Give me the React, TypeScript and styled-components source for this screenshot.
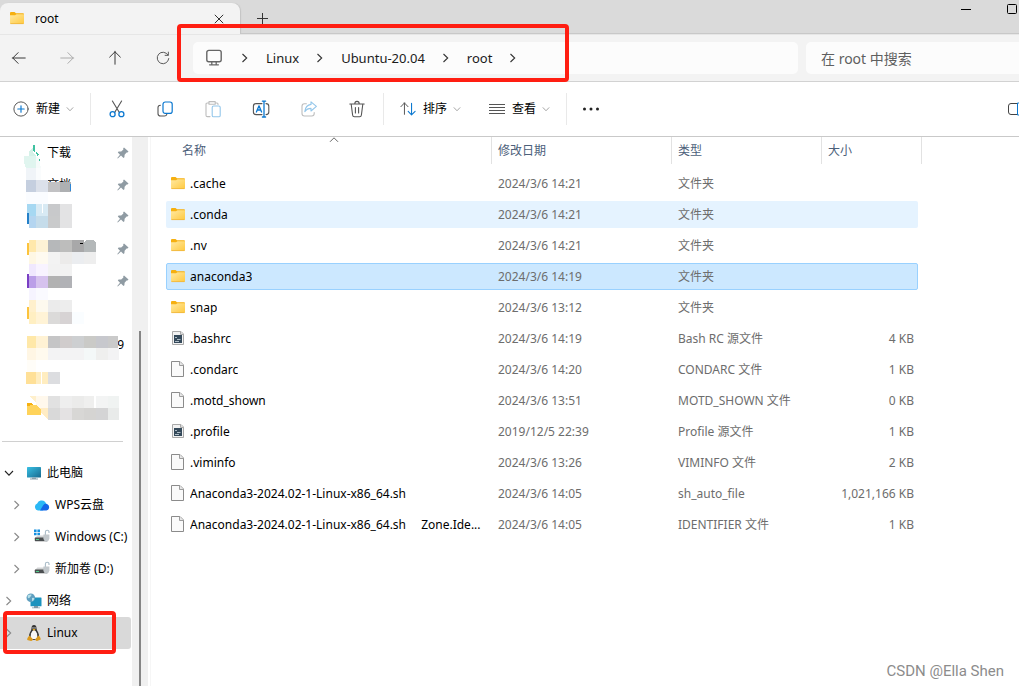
import React from 'react';
import styled, { createGlobalStyle } from 'styled-components';

const GlobalStyle = createGlobalStyle`
  * { box-sizing: border-box; }
  body {
    margin: 0;
    background: #fff;
    color: #000;
    font: 12px/16px "Noto Sans", "Noto Sans CJK SC", sans-serif;
    overflow-x: hidden;
  }
  button, input { font: inherit; color: inherit; }
  button { padding: 0; border: 0; background: none; }
  svg { display: block; flex: none; }
`;

const Window = styled.div`
  position: relative;
  display: flex;
  flex-direction: column;
  min-height: 100vh;
  overflow: hidden;
`;

/* ---------- title bar ---------- */

const TitleBar = styled.header`
  display: flex;
  align-items: flex-end;
  height: 34px;
  background: #dadada;
  box-shadow: inset 0 -1px #c8c8c8;
`;

const Tab = styled.div`
  display: flex;
  align-items: center;
  width: 240px;
  height: 31px;
  padding: 0 16px 0 9px;
  border-radius: 8px 8px 0 0;
  background: #f3f3f3;
  box-shadow: 1px 0 1px #c4c4c4;
`;

const TabTitle = styled.span`
  flex: 1;
  padding-left: 10px;
`;

const IconButton = styled.button<{ $w?: number; $h?: number }>`
  display: flex;
  align-items: center;
  justify-content: center;
  flex: none;
  width: ${(p) => p.$w ?? 48}px;
  height: ${(p) => p.$h ?? 32}px;
`;

const WindowControls = styled.div`
  display: flex;
  align-self: flex-start;
  margin-left: auto;
`;

const MaximizeButton = styled(IconButton)`
  justify-content: flex-end;
  padding-right: 2px;
`;

/* ---------- navigation ---------- */

const NavBar = styled.nav`
  position: relative;
  display: flex;
  align-items: center;
  height: 48px;
  border-top: 1px solid #e6e6e6;
  border-bottom: 1px solid #d2d2d2;
  background: #f3f3f3;
`;

const NavButtons = styled.div`
  display: flex;
  width: 193px;
  flex: none;

  button:first-child {
    width: 43px;
    padding-right: 5px;
  }
`;

const Address = styled.div`
  display: flex;
  align-items: center;
  gap: 12px;
  flex: 1;
  height: 32px;
  padding-left: 11px;
  border-radius: 5px;
  background: #fcfcfc;
  color: #1b1b1b;
`;

const Crumb = styled.a`
  color: inherit;
  font-size: 13px;
  line-height: 20px;
  text-decoration: none;
`;

const Search = styled.input`
  width: 213px;
  height: 32px;
  margin-left: 8px;
  padding: 0 15px;
  border: 0;
  border-radius: 5px 0 0 5px;
  background: #fcfcfc;
  font-size: 14px;

  &::placeholder { color: #5f5f5f; opacity: 1; }
`;

const Frame = styled.div`
  position: absolute;
  z-index: 2;
  border: 4px solid #ff1e12;
  border-radius: 4px;
  pointer-events: none;
`;

const AddressFrame = styled(Frame)`
  top: -11px;
  left: 177px;
  width: 392px;
  height: 58px;
`;

const ItemFrame = styled(Frame)`
  top: -6px;
  left: 3px;
  width: 113px;
  height: 43px;
`;

/* ---------- command bar ---------- */

const CommandBar = styled.div`
  display: flex;
  align-items: center;
  height: 55px;
  padding-left: 13px;
  border-bottom: 1px solid #c9c9c9;
  background: #fff;
  overflow: hidden;
`;

const Command = styled.button<{ $w: number }>`
  display: flex;
  align-items: center;
  gap: 7px;
  flex: none;
  width: ${(p) => p.$w}px;
  height: 32px;

  svg:last-child { margin-left: -1px; }
`;

const Divider = styled.span<{ $left?: number; $right?: number }>`
  width: 1px;
  height: 32px;
  margin: 0 ${(p) => p.$right ?? 0}px 0 ${(p) => p.$left ?? 0}px;
  background: #e9e9e9;
`;

const PaneToggle = styled(IconButton)`
  justify-content: flex-start;
  margin-left: auto;
`;

/* ---------- body ---------- */

const Body = styled.div`
  display: flex;
  flex: 1;
`;

const Sidebar = styled.aside`
  position: relative;
  width: 132px;
  flex: none;
`;

const List = styled.ul`
  position: relative;
  margin: 0;
  padding: 0;
  list-style: none;
`;

const TreeItem = styled.li<{ $level?: number; $selected?: boolean }>`
  position: relative;
  display: flex;
  align-items: center;
  height: 32px;
  margin-right: 1px;
  padding-left: ${(p) => (p.$level ?? 0) * 8}px;
  border-radius: 0 3px 3px 0;
  background: ${(p) => (p.$selected ? '#d9d9d9' : 'transparent')};
`;

const TreeLink = styled.a`
  display: flex;
  align-items: center;
  gap: 5px;
  margin-left: 9px;
  color: inherit;
  text-decoration: none;
  white-space: nowrap;
`;

const QuickItem = styled.li`
  display: flex;
  align-items: center;
  justify-content: space-between;
  height: 32px;
  padding: 0 3px 0 47px;
`;

const QuickLink = styled.a`
  color: inherit;
  text-decoration: none;
`;

const LongName = styled(QuickLink)`
  flex: 1;
  padding-right: 5px;
  text-align: right;
`;

const Mosaic = styled.svg`
  position: absolute;
  top: 0;
  left: 0;
`;

const Rule = styled.hr`
  width: 121px;
  height: 1px;
  margin: 16px 0 15px 2px;
  border: 0;
  background: #d0d0d0;
`;

const ScrollTrack = styled.div`
  display: flex;
  flex: none;
  width: 16px;
  padding: 194px 7px 0 7px;
  background: #f0f0f0;
`;

const ScrollThumb = styled.div`
  flex: 1;
  background: #858585;
`;

const Main = styled.main`
  flex: 1;
  min-width: 0;
  margin-left: 2px;
  padding-left: 15px;
  border-left: 1px solid #f6f6f6;
`;

const Files = styled.table`
  display: block;
`;

const Head = styled.thead`
  display: block;
  padding-left: 10px;
`;

const HeadRow = styled.tr`
  display: grid;
  grid-template-columns: 316px 180px 150px 100px;
  height: 27px;
`;

const HeadCell = styled.th`
  position: relative;
  display: flex;
  align-items: center;
  padding: 0 6px;
  border-right: 1px solid #e2e2e2;
  color: #4c607a;
  font-weight: 400;
`;

const SortMark = styled.svg`
  position: absolute;
  top: 0;
  left: 50%;
  margin-left: -5px;
`;

const FileRows = styled.tbody`
  display: grid;
  gap: 4px;
  padding-top: 6px;
`;

const FileRow = styled.tr<{ $state?: 'hover' | 'selected' }>`
  display: grid;
  grid-template-columns: 325px 180px 150px 95px;
  align-items: center;
  width: 752px;
  height: 27px;
  border: 1px solid ${(p) => (p.$state === 'selected' ? '#99d1ff' : 'transparent')};
  border-radius: 2px;
  background: ${(p) => (p.$state === 'selected' ? '#cce8ff' : p.$state === 'hover' ? '#e5f3ff' : 'transparent')};
`;

const NameCell = styled.td`
  display: flex;
  align-items: center;
  gap: 4px;
  padding: 0 8px 0 3px;
`;

const FileName = styled.span`
  overflow: hidden;
  text-overflow: ellipsis;
  white-space: pre;
`;

const Cell = styled.td<{ $end?: boolean }>`
  padding: 0 ${(p) => (p.$end ? 3 : 6)}px 0 6px;
  color: #6d6d6d;
  text-align: ${(p) => (p.$end ? 'right' : 'left')};
  white-space: nowrap;
`;

const Watermark = styled.div`
  position: absolute;
  right: 15px;
  bottom: 5px;
  color: #8c8c8c;
  font: 15px/20px Roboto, "Liberation Sans", sans-serif;
`;

/* ---------- drawings ---------- */

const FolderIcon = () => (
  <svg width="16" height="15" viewBox="0 1 16 15">
    <defs>
      <linearGradient id="folder" x1="0" y1="0" x2="1" y2="1">
        <stop offset="0" stopColor="#ffe9a2" />
        <stop offset="1" stopColor="#ffc93f" />
      </linearGradient>
    </defs>
    <path d="M1 3Q1 2 2 2H5.5L7 3.2H14Q15 3.2 15 4.2V8H1Z" fill="#f6b010" />
    <path d="M1 5.2H6L7.5 4.2H15V13Q15 14 14 14H2Q1 14 1 13Z" fill="url(#folder)" />
    <path d="M1.4 13.6H14.6" stroke="#eeb43a" strokeWidth="0.8" />
  </svg>
);

const FileIcon = () => (
  <svg width="16" height="17" viewBox="0 1 16 17">
    <path d="M1.5 1.5H10L13.5 5V16.5H1.5Z" fill="#fafafa" stroke="#8b8b8b" />
    <path d="M9.5 1.5V5.5H13.5" fill="#e6e6e6" stroke="#9c9c9c" />
  </svg>
);

const ScriptIcon = () => (
  <svg width="16" height="17" viewBox="0 1 16 17">
    <path d="M2.5 2.5H11L13.5 5V15.5H2.5Z" fill="#f2f2f2" stroke="#a9a9a9" />
    <path d="M10.5 2.5V5.5H13.5" fill="#ddd" stroke="#a9a9a9" />
    <rect x="4" y="6" width="8" height="8" fill="#34495a" />
    <path d="M5 8.5H7M7 10.5H10.5M5 12.5H9" stroke="#aebcc6" />
  </svg>
);

const Chevron = ({ dir, color = '#333', size = 10 }: { dir: 'right' | 'down'; color?: string; size?: number }) => (
  <svg width={size} height={size} viewBox="0 0 10 10" fill="none" stroke={color} strokeWidth="1.1">
    <path d={dir === 'right' ? 'M2.5 1L6.7 5L2.5 9' : 'M1 3L5 7.2L9 3'} />
  </svg>
);

const Line = ({ children, size = 18, color = '#555' }: { children: React.ReactNode; size?: number; color?: string }) => (
  <svg width={size} height={size} viewBox="0 0 18 18" fill="none" stroke={color} strokeWidth="1.1" strokeLinecap="round" strokeLinejoin="round">
    {children}
  </svg>
);

const BLUE = '#0b78d0';

const Pin = () => (
  <svg width="12" height="12" viewBox="0 0 12 12">
    <path d="M7 0.5L11.5 4.5L10.5 5.5L9.6 5.4L7.6 7.8L7.4 10.3L6.5 11L4 8.6L0.8 11.6L0.3 11.1L3 7.7L0.8 5.4L1.6 4.5L4.2 4.4L6.4 2.4L6.2 1.3Z" fill="#8f9ba3" />
  </svg>
);

const PcIcon = () => (
  <svg width="16" height="16" viewBox="0 0 16 16">
    <defs>
      <linearGradient id="pc" x1="0" y1="0" x2="1" y2="1">
        <stop offset="0" stopColor="#39c0e4" />
        <stop offset="1" stopColor="#17698f" />
      </linearGradient>
    </defs>
    <rect x="1" y="2" width="14" height="10.6" rx="0.6" fill="url(#pc)" />
    <path d="M6 12.6H10V13.6H12V14.6H4V13.6H6Z" fill="#8aa0ac" />
  </svg>
);

const CloudIcon = () => (
  <svg width="16" height="16" viewBox="0 0 16 16">
    <path d="M4 13.5A3.6 3.6 0 0 1 3.2 6.6A4.8 4.8 0 0 1 11 4.8L13 8L9 13.5Z" fill="#2bb8f5" />
    <path d="M6 13.5L9.2 8.2A3.6 3.6 0 0 1 13 7A3.4 3.4 0 0 1 12.4 13.5Z" fill="#1467e8" />
  </svg>
);

const DriveIcon = ({ system }: { system?: boolean }) => (
  <svg width="16" height="16" viewBox="0 0 16 16">
    {system && <path d="M0 0.6H2.6V3H0ZM3.4 0.6H6V3H3.4ZM0 3.8H2.6V6.2H0ZM3.4 3.8H6V6.2H3.4Z" fill="#1490e0" />}
    <path d="M3.4 6.6H13L14.5 9H1Z" fill="#d2d4d5" />
    <rect x="0.8" y="8.6" width="13" height="3.6" rx="0.6" fill="#4b4f51" />
    <rect x="2" y="10" width="3" height="1" fill="#4fcf8a" />
    <path d="M11.4 6V3A1.8 1.8 0 0 1 15 3V4" fill="none" stroke="#a9bcc8" strokeWidth="1.1" />
    <path d="M9.4 5.6H15.4V9.6Q15.4 11.8 12.4 13Q9.4 11.8 9.4 9.6Z" fill="#c2c8cc" />
  </svg>
);

const NetworkIcon = () => (
  <svg width="16" height="16" viewBox="0 0 16 16">
    <rect x="4.5" y="4.6" width="11" height="8.6" rx="0.5" fill="#1c93be" />
    <path d="M8 13H12V14.4H14V15.2H6V14.4H8Z" fill="#7f98a6" />
    <circle cx="4.8" cy="4.8" r="4.3" fill="#5f9fbf" />
    <path d="M2 2.2Q4 1 5.5 1.6Q5.6 3.4 4 4Q3.8 5.6 2 5Q1.2 3.6 2 2.2ZM6 5Q8 4.4 8.4 5.8Q7.6 8 6 8.2Z" fill="#b5dfe9" />
  </svg>
);

const TuxIcon = () => (
  <svg width="16" height="18" viewBox="0 0 16 18">
    <path d="M8 1Q10.4 1 10.5 4.2Q10.6 6.2 12.2 8.6Q13.8 11.2 12.6 14.6L8 16L3.4 14.6Q2.2 11.2 3.9 8.4Q5.5 6 5.5 4.2Q5.6 1 8 1Z" fill="#333" />
    <path d="M8 6Q9.8 6.2 11 9.4Q12 12.6 10.6 15H5.4Q4 12.6 5 9.4Q6.2 6.2 8 6Z" fill="#f7f7f7" />
    <circle cx="7" cy="3.9" r="0.7" fill="#fff" />
    <circle cx="9" cy="3.9" r="0.7" fill="#fff" />
    <path d="M6.4 5.4L8 4.7L9.6 5.4L8 6.8Z" fill="#e8a81c" />
    <path d="M3.4 11.6L6.8 15Q6.8 17.2 5 17L1.2 16Q1.2 14 2 13.2ZM12.6 11.6L9.4 15Q9.4 17.2 11 17L14.8 15.6Q14.6 14 14 13Z" fill="#dc9a1d" />
  </svg>
);

/* Pixelated cover over the private names: [x, y, width, colour], 12px high */
const tiles: [number, number, number, string][] = [
  [26, 168, 10, '#f0f4f8'], [36, 168, 5, '#fafcfd'],
  [26, 180, 10, '#c5cfdf'], [36, 180, 12, '#dce1ea'], [48, 182, 12, '#c2c2c4'], [60, 182, 11, '#aeb0b2'],
  [26, 192, 22, '#fafcff'],
  [27, 204, 9, '#a6d8f2'], [36, 204, 12, '#d8eaf4'], [48, 204, 12, '#c8c9cb'], [60, 204, 12, '#e3e3e4'],
  [29, 216, 7, '#b4d5f0'], [36, 216, 12, '#c5dcea'], [48, 216, 12, '#c9cacb'], [60, 216, 12, '#e3e3e4'],
  [29, 240, 7, '#ffe8ab'], [36, 240, 12, '#fdf2d5'], [48, 240, 12, '#b6b8ba'], [60, 240, 12, '#bdbdbc'], [72, 240, 12, '#a8a8a9'],
  [29, 252, 7, '#fef7e4'], [36, 252, 12, '#fefaf0'], [48, 252, 12, '#f3f3f3'], [60, 252, 12, '#ecebea'], [72, 252, 12, '#ebedf0'], [84, 252, 12, '#eeeeee'],
  [29, 264, 7, '#f0e8fe'], [36, 264, 12, '#f8f3ff'], [48, 264, 24, '#f2f2f2'],
  [29, 276, 7, '#bb9fe8'], [36, 276, 12, '#d6c2ee'], [48, 276, 12, '#b2b2b2'], [60, 276, 12, '#b1b2b6'],
  [29, 288, 7, '#f6f4ff'], [36, 288, 12, '#fafaff'],
  [29, 300, 7, '#fff0cc'], [36, 300, 12, '#fdf9ee'], [48, 300, 12, '#ebebeb'], [60, 300, 12, '#ededed'],
  [29, 312, 7, '#ffefc2'], [36, 312, 12, '#fff3d6'], [48, 312, 12, '#dbdad9'], [60, 312, 12, '#d7d3d4'], [72, 312, 12, '#fafdff'],
  [27, 336, 9, '#ffe8a8'], [36, 336, 12, '#fff2d4'], [48, 336, 12, '#c5c5c6'], [60, 336, 12, '#d0cccc'], [72, 336, 12, '#cdcfd1'], [84, 336, 12, '#cacac7'], [96, 336, 12, '#c7c8cd'], [108, 336, 10, '#cacaca'],
  [27, 348, 9, '#fff6e4'], [36, 348, 12, '#fffaee'], [48, 348, 36, '#f3f3f4'], [84, 348, 12, '#f4f8f8'], [96, 348, 12, '#efefee'], [108, 348, 11, '#f3f3f4'],
  [27, 360, 9, '#fffdf8'],
  [26, 372, 10, '#ffe097'], [36, 372, 5, '#ffedc0'], [42, 372, 6, '#ffedc0'], [48, 372, 12, '#dcdde0'],
  [36, 396, 12, '#fff8ec'], [48, 396, 12, '#e1e1e1'], [60, 396, 12, '#eeeeee'], [72, 396, 12, '#ebebea'], [84, 396, 10, '#efefee'], [96, 396, 12, '#f3f4f4'], [108, 396, 11, '#f0f3f2'],
  [48, 408, 12, '#d9d9d9'], [60, 408, 12, '#e4e2e3'], [72, 408, 12, '#d8d7d5'], [84, 408, 12, '#d5d4d2'], [96, 408, 12, '#d4d4d5'], [108, 408, 11, '#e9ebea'],
];

const NameCover = () => (
  <Mosaic width="132" height="288" viewBox="0 137 132 288" shapeRendering="crispEdges" aria-hidden="true">
    <path d="M33 145H35V153L33 151ZM36 152L39 154L37 156ZM39 159H40V162H39Z" fill="#3fc1a0" />
    <path d="M29 151L33 148V152L36 156V157H29Z" fill="#d5f1e8" />
    <path d="M24 156H36V168H26L24 162Z" fill="#e0f5ef" />
    <path d="M36 157L39 158L41 168H36Z" fill="#f6fbfa" />
    {tiles.map(([x, y, w, fill]) => (
      <rect key={`${x}-${y}`} x={x} y={y} width={w} height={y === 182 ? 10 : 12} fill={fill} />
    ))}
    <path d="M84 242L87 240H93L96 242V252H84Z" fill="#b4b8b9" />
    <path d="M79 243H83L82 244H80Z" fill="#000" />
    <rect x="70" y="184" width="1" height="7" fill="#2f86d4" />
    <rect x="27" y="213" width="2" height="11" fill="#2480c8" />
    <rect x="42" y="204" width="1" height="9" fill="#fff" />
    <path d="M27 243H29V255H27ZM27 307H29V319H27Z" fill="#fcc33c" />
    <rect x="27" y="274" width="2" height="14" fill="#7a3fc4" />
    <path d="M29 396H36V402Z" fill="#fff0cc" />
    <path d="M36 408H48V420L41 412Z" fill="#ffecc4" />
    <path d="M27 403H32L33 405H36L41 410V415H27Z" fill="#ffd35a" />
    <path d="M27 403H32L33 405L27 406Z" fill="#f6b010" />
  </Mosaic>
);

/* ---------- data ---------- */

type Entry = { name: string; date: string; type: string; size?: string; icon: 'folder' | 'file' | 'script'; state?: 'hover' | 'selected' };

const entries: Entry[] = [
  { name: '.cache', date: '2024/3/6 14:21', type: '文件夹', icon: 'folder' },
  { name: '.conda', date: '2024/3/6 14:21', type: '文件夹', icon: 'folder', state: 'hover' },
  { name: '.nv', date: '2024/3/6 14:21', type: '文件夹', icon: 'folder' },
  { name: 'anaconda3', date: '2024/3/6 14:19', type: '文件夹', icon: 'folder', state: 'selected' },
  { name: 'snap', date: '2024/3/6 13:12', type: '文件夹', icon: 'folder' },
  { name: '.bashrc', date: '2024/3/6 14:19', type: 'Bash RC 源文件', size: '4 KB', icon: 'script' },
  { name: '.condarc', date: '2024/3/6 14:20', type: 'CONDARC 文件', size: '1 KB', icon: 'file' },
  { name: '.motd_shown', date: '2024/3/6 13:51', type: 'MOTD_SHOWN 文件', size: '0 KB', icon: 'file' },
  { name: '.profile', date: '2019/12/5 22:39', type: 'Profile 源文件', size: '1 KB', icon: 'script' },
  { name: '.viminfo', date: '2024/3/6 13:26', type: 'VIMINFO 文件', size: '2 KB', icon: 'file' },
  { name: 'Anaconda3-2024.02-1-Linux-x86_64.sh', date: '2024/3/6 14:05', type: 'sh_auto_file', size: '1,021,166 KB', icon: 'file' },
  { name: 'Anaconda3-2024.02-1-Linux-x86_64.sh\u2003 Zone.Ide...', date: '2024/3/6 14:05', type: 'IDENTIFIER 文件', size: '1 KB', icon: 'file' },
];

const fileIcons = { folder: <FolderIcon />, file: <FileIcon />, script: <ScriptIcon /> };

const tree = [
  { name: '此电脑', icon: <PcIcon />, open: true },
  { name: 'WPS云盘', icon: <CloudIcon />, level: 1 },
  { name: 'Windows (C:)', icon: <DriveIcon system />, level: 1 },
  { name: '新加卷 (D:)', icon: <DriveIcon />, level: 1 },
  { name: '网络', icon: <NetworkIcon /> },
  { name: 'Linux', icon: <TuxIcon />, selected: true },
];

const quick: { name?: string; long?: boolean; pinned?: boolean }[] = [
  { name: '下载', pinned: true },
  { name: '文档', pinned: true },
  { pinned: true },
  { pinned: true },
  { pinned: true },
  {},
  { name: '9', long: true },
  {},
  {},
];

export default function App() {
  return (
    <Window>
      <GlobalStyle />
      <TitleBar>
        <Tab>
          <FolderIcon />
          <TabTitle>root</TabTitle>
          <IconButton $w={10} $h={24} aria-label="关闭标签页">
            <svg width="10" height="10" viewBox="0 0 10 10" stroke="#333"><path d="M0.8 0.8L9.2 9.2M9.2 0.8L0.8 9.2" /></svg>
          </IconButton>
        </Tab>
        <IconButton $w={45} $h={31} aria-label="新建标签页">
          <svg width="11" height="11" viewBox="0 0 11 11" stroke="#333"><path d="M5.5 0V11M0 5.5H11" /></svg>
        </IconButton>
        <WindowControls>
          <IconButton $w={46} $h={18} aria-label="最小化">
            <svg width="10" height="10" viewBox="0 0 10 10" stroke="#000"><path d="M0 5.5H10" /></svg>
          </IconButton>
          <MaximizeButton $w={30} $h={18} aria-label="最大化">
            <svg width="10" height="10" viewBox="0 0 10 10" fill="none" stroke="#000"><rect x="0.5" y="0.5" width="9" height="9" rx="1" /></svg>
          </MaximizeButton>
        </WindowControls>
      </TitleBar>

      <NavBar>
        <NavButtons>
          <IconButton aria-label="后退"><Line size={16} color="#333"><path d="M2 9H16M2 9L8 3M2 9L8 15" /></Line></IconButton>
          <IconButton aria-label="前进"><Line size={16} color="#aaa"><path d="M2 9H16M16 9L10 3M16 9L10 15" /></Line></IconButton>
          <IconButton aria-label="向上"><Line size={16} color="#333"><path d="M9 2V16M9 2L3 8M9 2L15 8" /></Line></IconButton>
          <IconButton aria-label="刷新">
            <Line size={16}><path d="M14.6 5.6A6.5 6.5 0 1 0 15.5 9.6M15 2.4V6H11.4" /></Line>
          </IconButton>
        </NavButtons>
        <Address>
          <IconButton $w={20} aria-label="此电脑">
            <Line color="#666">
              <rect x="1.8" y="1.4" width="14.4" height="11.4" rx="2" strokeWidth="1.4" />
              <path d="M6.8 13V15.2M11.2 13V15.2M4.6 15.8H13.4" strokeWidth="1.3" />
            </Line>
          </IconButton>
          <IconButton $w={18} aria-label="展开"><Chevron dir="right" /></IconButton>
          <Crumb href="#linux">Linux</Crumb>
          <IconButton $w={18} aria-label="展开 Linux"><Chevron dir="right" /></IconButton>
          <Crumb href="#ubuntu">Ubuntu-20.04</Crumb>
          <IconButton $w={18} aria-label="展开 Ubuntu-20.04"><Chevron dir="right" /></IconButton>
          <Crumb href="#root">root</Crumb>
          <IconButton $w={18} aria-label="展开 root"><Chevron dir="right" /></IconButton>
        </Address>
        <Search type="text" aria-label="搜索" placeholder="在 root 中搜索" />
        <AddressFrame />
      </NavBar>

      <CommandBar>
        <Command $w={77}>
          <Line size={16}>
            <circle cx="9" cy="9" r="8" />
            <path d="M9 5.4V12.6M5.4 9H12.6" stroke={BLUE} strokeWidth="1.3" />
          </Line>
          新建
          <Chevron dir="down" color="#999" size={8} />
        </Command>
        <Divider $right={2} />
        <IconButton aria-label="剪切">
          <Line>
            <path d="M4.4 1L11.2 12.2M13.6 1L6.8 12.2" />
            <circle cx="4.6" cy="14.2" r="2.5" stroke={BLUE} strokeWidth="1.3" />
            <circle cx="13.4" cy="14.2" r="2.5" stroke={BLUE} strokeWidth="1.3" />
          </Line>
        </IconButton>
        <IconButton aria-label="复制">
          <Line>
            <path d="M4.4 5.2Q2 5.2 2 7.6V13.4Q2 16 4.6 16H8.4Q10.4 16 10.8 14.4" />
            <rect x="7" y="2" width="9.2" height="11.4" rx="2.2" stroke={BLUE} strokeWidth="1.2" />
          </Line>
        </IconButton>
        <IconButton aria-label="粘贴">
          <Line color="#bdbdbd">
            <path d="M4.6 3H3.2Q2 3 2 4.2V15.2Q2 16.6 3.4 16.6H6M11.6 3H13Q14 3 14 4V4.4M5 1.6H11.2V4.2H5Z" />
            <rect x="8.2" y="6" width="8" height="10.8" rx="1.4" stroke="#93c6ea" />
          </Line>
        </IconButton>
        <IconButton aria-label="重命名">
          <Line>
            <path d="M10 3.6H4Q1.4 3.6 1.4 6.2V12Q1.4 14.6 4 14.6H10M14 3.6Q16.8 3.6 16.8 6.2V12Q16.8 14.6 14 14.6" />
            <path d="M4.4 12L7 5.8L9.6 12M5.2 10H8.8M12 1.4V16.8M10.4 1.2H13.6M10.4 17H13.6" stroke={BLUE} strokeWidth="1.3" />
          </Line>
        </IconButton>
        <IconButton aria-label="共享">
          <Line color="#bdbdbd">
            <path d="M6.4 3.8H4.4Q2 3.8 2 6.2V13.6Q2 16 4.4 16H11.8Q14.2 16 14.2 13.6V12.6" />
            <path d="M11 1.8L16.4 6.4L11 11V8.4Q7 8.4 4.8 11.6Q5.6 5 11 4.4Z" stroke="#93c6ea" />
          </Line>
        </IconButton>
        <IconButton aria-label="删除">
          <Line>
            <path d="M1.8 4H16.2M6.8 3.8Q6.8 1.4 9 1.4Q11.2 1.4 11.2 3.8M3.2 4.2L4.6 15Q4.8 16.8 6.4 16.8H11.6Q13.2 16.8 13.4 15L14.8 4.2M7.4 7.6V13M10.6 7.6V13" />
          </Line>
        </IconButton>
        <Divider $left={2} $right={16} />
        <Command $w={89}>
          <Line size={16}>
            <path d="M5 2.4V15M5 2.2L1 6.4M5 2.2L9 6.4" />
            <path d="M13 2.6V15.4M13 15.6L9.2 11.6M13 15.6L17 11.6" stroke={BLUE} strokeWidth="1.2" />
          </Line>
          排序
          <Chevron dir="down" color="#999" size={8} />
        </Command>
        <Command $w={77}>
          <svg width="16" height="16" viewBox="0 0 16 16" stroke="#555"><path d="M0 3.5H16M0 6.5H16M0 9.5H16M0 12.5H16" /></svg>
          查看
          <Chevron dir="down" color="#999" size={8} />
        </Command>
        <Divider />
        <IconButton aria-label="更多">
          <svg width="18" height="4" viewBox="0 0 18 4" fill="#222"><circle cx="2.5" cy="2" r="1.5" /><circle cx="9" cy="2" r="1.5" /><circle cx="15.5" cy="2" r="1.5" /></svg>
        </IconButton>
        <PaneToggle $w={12} aria-label="详细信息窗格">
          <svg width="18" height="14" viewBox="0 0 18 14" fill="none">
            <path d="M10 1.5H4Q1.5 1.5 1.5 4V10Q1.5 12.5 4 12.5H10" stroke="#444" />
            <path d="M10.5 1V13H14Q17 13 17 10V4Q17 1 14 1Z" stroke={BLUE} />
          </svg>
        </PaneToggle>
      </CommandBar>

      <Body>
        <Sidebar>
          <List>
            {quick.map((q, i) => (
              <QuickItem key={i}>
                {q.long ? <LongName href="#folder">{q.name}</LongName> : <QuickLink href="#folder">{q.name}</QuickLink>}
                {q.pinned && <Pin />}
              </QuickItem>
            ))}
            <NameCover />
          </List>
          <Rule />
          <List>
            {tree.map((t) => (
              <TreeItem key={t.name} $level={t.level} $selected={t.selected}>
                <IconButton $w={17} aria-label={`展开 ${t.name}`}>
                  <Chevron dir={t.open ? 'down' : 'right'} color={t.open ? '#222' : '#888'} />
                </IconButton>
                <TreeLink href="#item">
                  {t.icon}
                  {t.name}
                </TreeLink>
                {t.selected && <ItemFrame />}
              </TreeItem>
            ))}
          </List>
        </Sidebar>
        <ScrollTrack>
          <ScrollThumb />
        </ScrollTrack>
        <Main>
          <Files>
            <Head>
              <HeadRow>
                <HeadCell scope="col">
                  名称
                  <SortMark width="10" height="6" viewBox="0 0 10 6" fill="none" stroke="#666"><path d="M1 4.8L5 0.8L9 4.8" /></SortMark>
                </HeadCell>
                <HeadCell scope="col">修改日期</HeadCell>
                <HeadCell scope="col">类型</HeadCell>
                <HeadCell scope="col">大小</HeadCell>
              </HeadRow>
            </Head>
            <FileRows>
              {entries.map((e) => (
                <FileRow key={e.name} $state={e.state}>
                  <NameCell>
                    {fileIcons[e.icon]}
                    <FileName>{e.name}</FileName>
                  </NameCell>
                  <Cell>{e.date}</Cell>
                  <Cell>{e.type}</Cell>
                  <Cell $end>{e.size}</Cell>
                </FileRow>
              ))}
            </FileRows>
          </Files>
        </Main>
      </Body>
      <Watermark>CSDN @Ella Shen</Watermark>
    </Window>
  );
}
